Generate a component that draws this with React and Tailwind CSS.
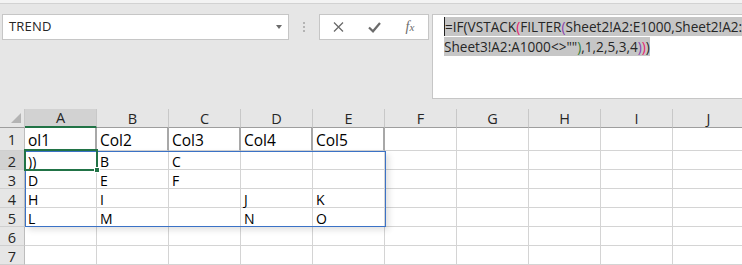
import React from "react";

const FONT = { fontFamily: '"Open Sans", "Noto Sans", "Liberation Sans", sans-serif' };

const cols = ["A", "B", "C", "D", "E", "F", "G", "H", "I", "J"];
const data = [
  ["ol1", "Col2", "Col3", "Col4", "Col5"],
  ["))", "B", "C", "", ""],
  ["D", "E", "F", "", ""],
  ["H", "I", "", "J", "K"],
  ["L", "M", "", "N", "O"],
  ["", "", "", "", ""],
  ["", "", "", "", ""],
];

function XIcon() {
  return (
    <svg width="11" height="10" viewBox="0 0 11 10">
      <path d="M1 0.5 L10 9.5 M10 0.5 L1 9.5" stroke="#6b6b6b" strokeWidth="1.3" fill="none" />
    </svg>
  );
}

function CheckIcon() {
  return (
    <svg width="13" height="11" viewBox="0 0 13 11">
      <path d="M1 5.5 L5 9.3 L12 1" stroke="#6b6b6b" strokeWidth="2.2" fill="none" />
    </svg>
  );
}

export default function App() {
  return (
    <div className="w-[742px] h-[265px] overflow-hidden bg-[#e6e6e6] text-black" style={FONT}>
      {/* ribbon edge */}
      <div className="h-[4px] bg-[#f3f3f3] border-b border-[#d2d2d2]" />

      {/* formula bar row */}
      <div className="h-[105px] flex items-start pt-[10px] pl-[2px]">
        {/* name box */}
        <div className="w-[287px] h-[26px] bg-white border border-[#c6c6c6] flex items-center justify-between pl-[6px] pr-[6px]">
          <span className="text-[13px] text-[#262626] tracking-[0.2px]">TREND</span>
          <span className="w-0 h-0 border-l-[3.5px] border-r-[3.5px] border-t-[4px] border-l-transparent border-r-transparent border-t-[#6b6b6b]" />
        </div>
        {/* dots */}
        <div className="w-[30px] h-[26px] flex flex-col items-center justify-center gap-[2px]">
          <span className="w-[2px] h-[2px] bg-[#b4b4b4]" />
          <span className="w-[2px] h-[2px] bg-[#b4b4b4]" />
          <span className="w-[2px] h-[2px] bg-[#b4b4b4]" />
        </div>
        {/* fx box */}
        <div className="w-[110px] h-[26px] bg-white border border-[#c6c6c6] grid grid-cols-3 items-center justify-items-center">
          <XIcon />
          <CheckIcon />
          <span className="italic text-[#6b6b6b] text-[14px] leading-none" style={{ fontFamily: '"Liberation Serif", "DejaVu Serif", serif' }}>
            f<span className="text-[11px]">x</span>
          </span>
        </div>
        {/* formula box */}
        <div className="ml-[3px] flex-1 min-w-0 h-[85px] bg-white border-t border-b border-l border-[#c6c6c6] pl-[11px] pt-[2px] overflow-hidden">
          <div className="text-[13.6px] leading-[20px] text-[#262626] whitespace-nowrap">
            <div>
              <span className="bg-[#c6c6c6]">
                <span className="border-l border-[#222]">=</span>IF(VSTACK<span className="text-[#e8216f]">(</span>FILTER<span className="text-[#8a3fb0]">(</span>Sheet2!A2:E1000,Sheet2!A2:A1000&lt;&gt;""),FILTER(
              </span>
            </div>
            <div>
              <span className="bg-[#c6c6c6]">
                Sheet3!A2:A1000&lt;&gt;""<span className="text-[#2e7d32]">)</span>,1,2,5,3,4<span className="text-[#8a3fb0]">)</span><span className="text-[#e8216f]">)</span>)
              </span>
            </div>
          </div>
        </div>
      </div>

      {/* grid */}
      <div className="relative">
        <div className="grid grid-cols-[25px_repeat(10,72px)] grid-rows-[19px_23px_19px_19px_19px_19px_19px_19px]">
          {/* corner */}
          <div className="bg-[#e6e6e6] border-r border-b border-[#9e9e9e] border-r-[#c8c8c8] flex items-end justify-end pr-[3px] pb-[4px]">
            <svg width="10" height="10" viewBox="0 0 10 10">
              <path d="M10 0 L10 10 L0 10 Z" fill="#b4b4b4" />
            </svg>
          </div>
          {cols.map((c, i) => (
            <div
              key={c}
              className={
                i === 0
                  ? "bg-[#d2d2d2] border-r border-[#c8c8c8] border-b-2 border-b-[#217346] flex items-center justify-center text-[14.5px] text-[#262626] leading-none pt-[1px]"
                  : "bg-[#e6e6e6] border-r border-[#c8c8c8] border-b border-b-[#9e9e9e] flex items-center justify-center text-[14.5px] text-[#262626] leading-none pt-[2px]"
              }
            >
              {c}
            </div>
          ))}

          {data.map((row, r) => (
            <React.Fragment key={r}>
              <div
                className={
                  (r === 1 ? "bg-[#d2d2d2] " : "bg-[#e6e6e6] ") +
                  "border-r border-b border-[#cfcfcf] border-r-[#bdbdbd] flex items-end justify-center text-[14.5px] text-[#262626] " +
                  (r === 0 ? "leading-[16px] pb-[2px]" : "leading-[14px]")
                }
              >
                {r + 1}
              </div>
              {cols.map((c, ci) => {
                const v = ci < 5 ? row[ci] : "";
                const header = r === 0;
                const cls = header
                  ? "bg-white border-b border-[#d4d4d4] flex items-end pl-[3px] text-[15.5px] leading-[16px] pb-[2px] whitespace-nowrap " +
                    (ci < 5 ? "border-r-2 border-r-[#a8a8a8]" : "border-r border-r-[#d4d4d4]")
                  : "bg-white border-r border-b border-[#d4d4d4] flex items-end pl-[3px] text-[14px] leading-[14px] whitespace-nowrap";
                return (
                  <div key={c} className={cls}>
                    {v}
                  </div>
                );
              })}
            </React.Fragment>
          ))}
        </div>

        {/* blue spill range */}
        <div className="absolute left-[25px] top-[42px] w-[361px] h-[76px] border border-[#3b72c6] shadow-[3px_3px_6px_rgba(0,0,0,0.12)] pointer-events-none" />

        {/* active cell */}
        <div className="absolute left-[24px] top-[40px] w-[74px] h-[22px] border-2 border-[#217346] pointer-events-none">
          <span className="absolute right-[-4px] bottom-[-4px] w-[6px] h-[6px] bg-[#217346] border border-white" />
        </div>
      </div>
    </div>
  );
}
